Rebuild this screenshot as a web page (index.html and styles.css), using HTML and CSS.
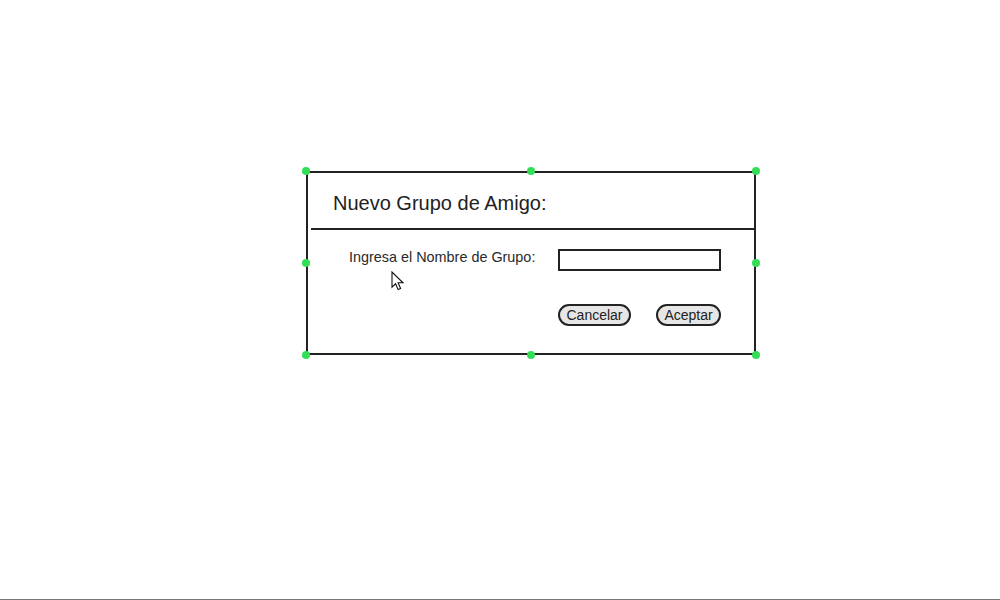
FILE: index.html
```html
<!DOCTYPE html>
<html lang="es">
<head>
<meta charset="utf-8">
<title>Nuevo Grupo de Amigo</title>
<link rel="stylesheet" href="styles.css">
</head>
<body>
<div class="page">
  <div class="canvas">
    <div class="dialog">
      <div class="dialog-title">Nuevo Grupo de Amigo:</div>
      <div class="divider"></div>
      <div class="form-row">
        <label class="form-label" for="grupo">Ingresa el Nombre de Grupo:</label>
        <input class="form-input" id="grupo" type="text">
      </div>
      <div class="actions">
        <button class="btn btn-cancel" type="button">Cancelar</button>
        <button class="btn btn-accept" type="button">Aceptar</button>
      </div>

      <span class="handle h-tl"></span>
      <span class="handle h-tc"></span>
      <span class="handle h-tr"></span>
      <span class="handle h-ml"></span>
      <span class="handle h-mr"></span>
      <span class="handle h-bl"></span>
      <span class="handle h-bc"></span>
      <span class="handle h-br"></span>

      <svg class="cursor" width="14" height="20" viewBox="0 0 14 20" aria-hidden="true">
        <path d="M1 1 L1 16.2 L4.6 12.8 L7.1 18.6 L9.6 17.5 L7.1 11.8 L12 11.8 Z" fill="#fff" stroke="#111" stroke-width="1.1" stroke-linejoin="miter"/>
      </svg>
    </div>
  </div>
</div>
</body>
</html>
```

FILE: styles.css
```css
* {
  box-sizing: border-box;
}

html, body {
  margin: 0;
  padding: 0;
  background: #ffffff;
}

body {
  font-family: "Liberation Sans", Arial, sans-serif;
  color: #222222;
}

.page {
  width: 1000px;
  height: 600px;
  border-bottom: 1px solid #777777;
  overflow: hidden;
}

.canvas {
  padding: 171px 0 0 306px;
}

.dialog {
  position: relative;
  width: 450px;
  height: 184px;
  border: 2px solid #222222;
  background: #ffffff;
  display: flex;
  flex-direction: column;
}

.dialog-title {
  height: 55px;
  padding: 18px 0 0 25px;
  font-size: 20px;
  line-height: 24px;
  color: #222222;
}

.divider {
  height: 2px;
  margin-left: 3px;
  background: #222222;
}

.form-row {
  display: flex;
  align-items: flex-start;
  margin-top: 19px;
  padding-left: 41px;
}

.form-label {
  flex: 0 0 209px;
  margin-top: 0;
  font-size: 14.4px;
  line-height: 16px;
  color: #2a2a2a;
}

.form-input {
  width: 163px;
  height: 22px;
  margin: 0;
  padding: 0 4px;
  border: 2px solid #222222;
  border-radius: 0;
  background: #ffffff;
  font-family: "Liberation Sans", Arial, sans-serif;
  font-size: 14px;
  outline: none;
}

.actions {
  display: flex;
  justify-content: flex-end;
  gap: 25px;
  margin-top: 33px;
  padding-right: 33px;
}

.btn {
  height: 22px;
  margin: 0;
  padding: 0;
  border: 2px solid #222222;
  border-radius: 11px;
  background: #e6e6e6;
  color: #222222;
  font-family: "Liberation Sans", Arial, sans-serif;
  font-size: 14px;
  line-height: 18px;
  text-align: center;
}

.btn-cancel {
  width: 73px;
}

.btn-accept {
  width: 65px;
}

.handle {
  position: absolute;
  width: 8px;
  height: 8px;
  border-radius: 50%;
  background: #33dd55;
}

.h-tl { left: -6px;  top: -6px; }
.h-tc { left: 219px; top: -6px; }
.h-tr { left: 444px; top: -6px; }
.h-ml { left: -6px;  top: 86px; }
.h-mr { left: 444px; top: 86px; }
.h-bl { left: -6px;  top: 178px; }
.h-bc { left: 219px; top: 178px; }
.h-br { left: 444px; top: 178px; }

.cursor {
  position: absolute;
  left: 83px;
  top: 98px;
}
```
